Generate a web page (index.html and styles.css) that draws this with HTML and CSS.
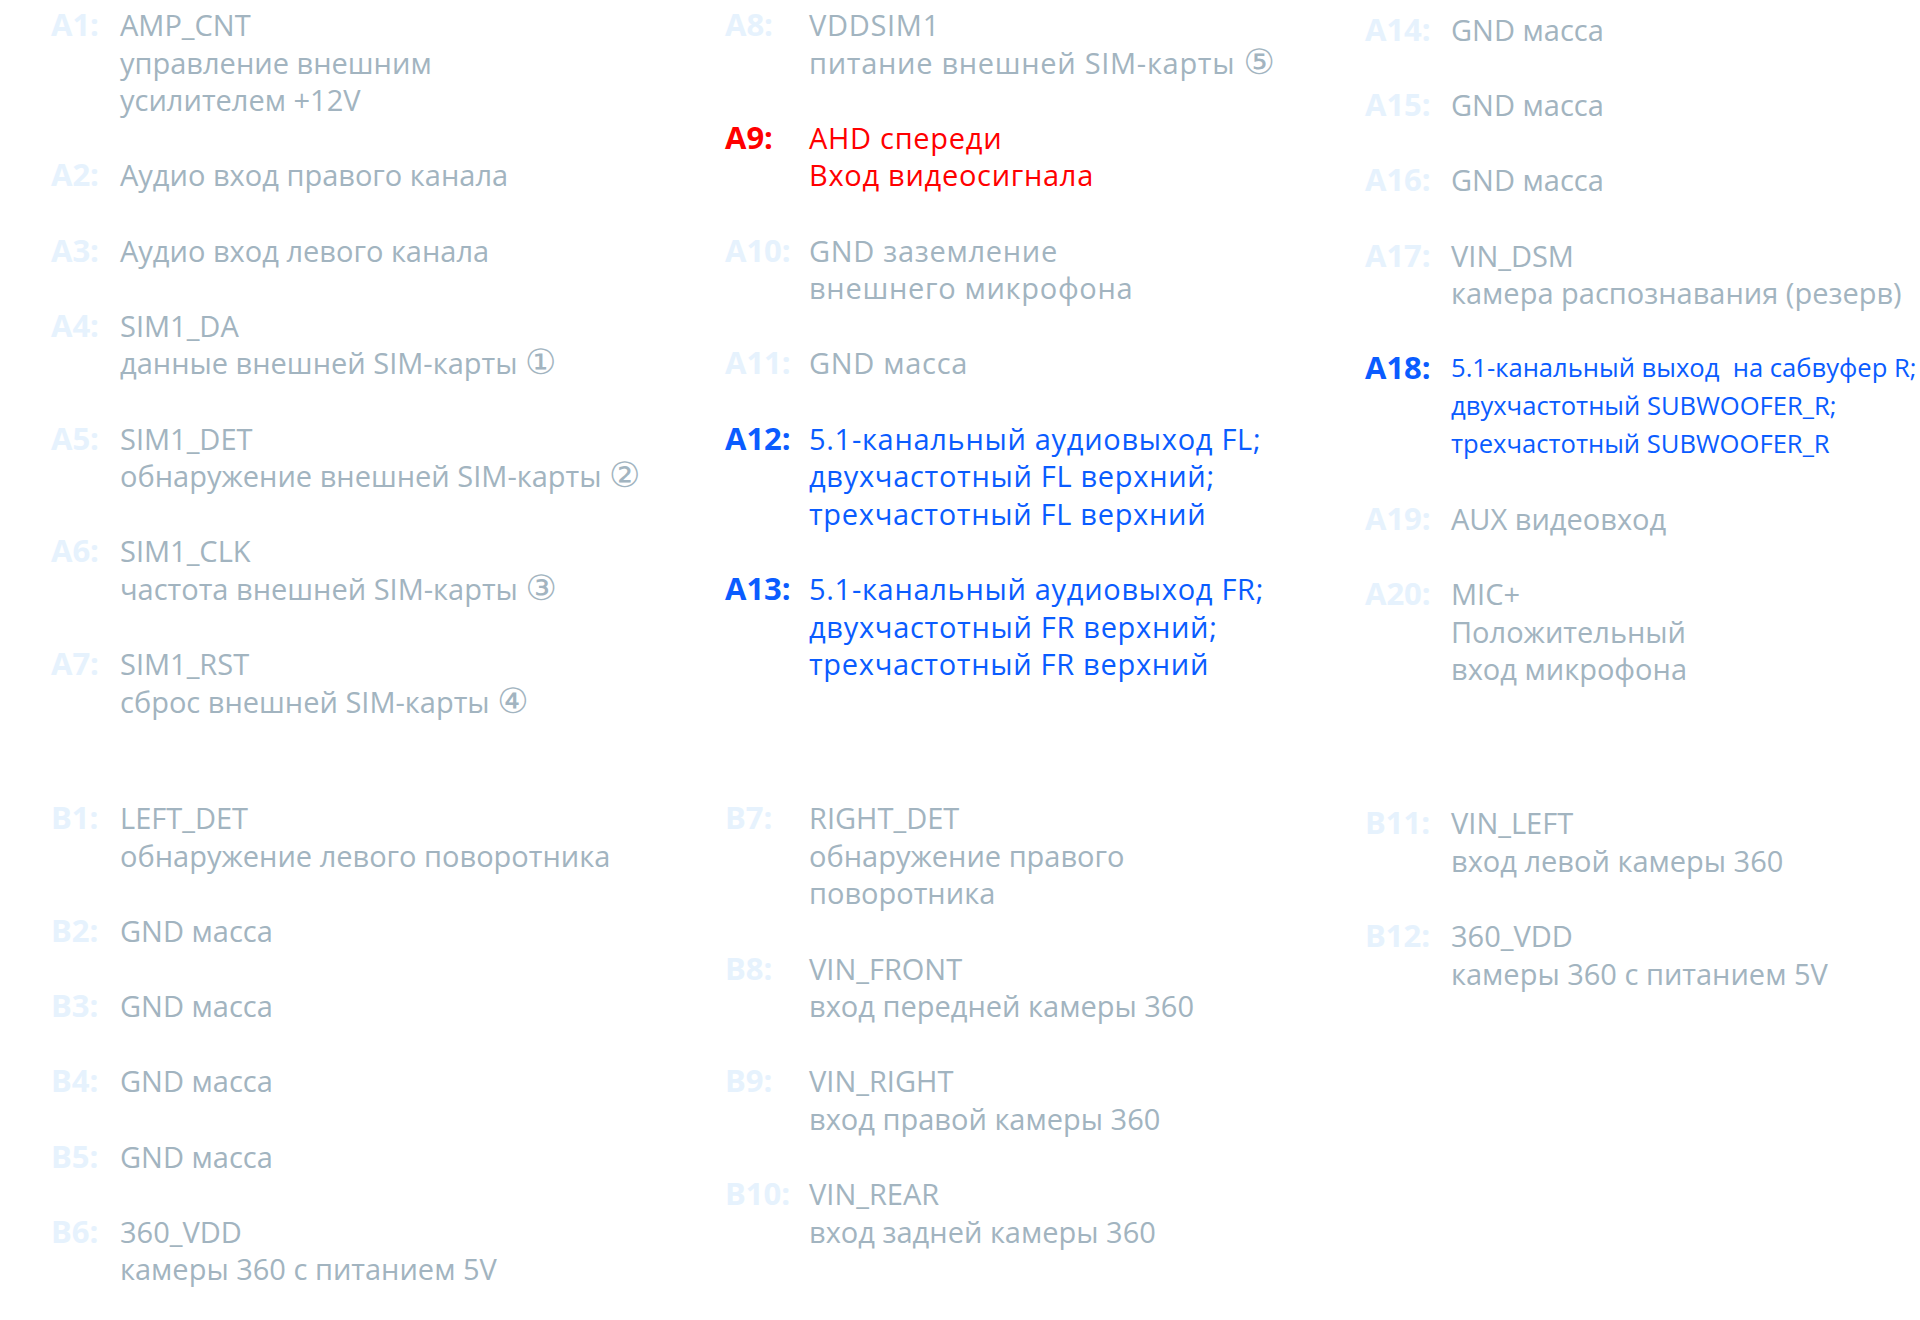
FILE: index.html
```html
<!DOCTYPE html>
<html lang="ru">
<head>
<meta charset="utf-8">
<title>Распиновка разъёма</title>
<link rel="stylesheet" href="styles.css">
</head>
<body>
<main class="page">
  <section class="row row-a">
    <div class="col col-1">
      <div class="entry"><span class="label">A1:</span><div class="text">AMP_CNT<br>управление внешним<br>усилителем +12V</div></div>
      <div class="entry"><span class="label">A2:</span><div class="text">Аудио вход правого канала</div></div>
      <div class="entry"><span class="label">A3:</span><div class="text">Аудио вход левого канала</div></div>
      <div class="entry"><span class="label">A4:</span><div class="text">SIM1_DA<br>данные внешней SIM-карты <span class="circ">①</span></div></div>
      <div class="entry"><span class="label">A5:</span><div class="text">SIM1_DET<br>обнаружение внешней SIM-карты <span class="circ">②</span></div></div>
      <div class="entry"><span class="label">A6:</span><div class="text">SIM1_CLK<br>частота внешней SIM-карты <span class="circ">③</span></div></div>
      <div class="entry"><span class="label">A7:</span><div class="text">SIM1_RST<br>сброс внешней SIM-карты <span class="circ">④</span></div></div>
    </div>
    <div class="col col-2">
      <div class="entry"><span class="label">A8:</span><div class="text">VDDSIM1<br>питание внешней SIM-карты <span class="circ">⑤</span></div></div>
      <div class="entry red"><span class="label">A9:</span><div class="text">AHD спереди<br>Вход видеосигнала</div></div>
      <div class="entry"><span class="label">A10:</span><div class="text">GND заземление<br>внешнего микрофона</div></div>
      <div class="entry"><span class="label">A11:</span><div class="text">GND масса</div></div>
      <div class="entry blue"><span class="label">A12:</span><div class="text">5.1-канальный аудиовыход FL;<br>двухчастотный FL верхний;<br>трехчастотный FL верхний</div></div>
      <div class="entry blue"><span class="label">A13:</span><div class="text">5.1-канальный аудиовыход FR;<br>двухчастотный FR верхний;<br>трехчастотный FR верхний</div></div>
    </div>
    <div class="col col-3">
      <div class="entry"><span class="label">A14:</span><div class="text">GND масса</div></div>
      <div class="entry"><span class="label">A15:</span><div class="text">GND масса</div></div>
      <div class="entry"><span class="label">A16:</span><div class="text">GND масса</div></div>
      <div class="entry"><span class="label">A17:</span><div class="text">VIN_DSM<br>камера распознавания (резерв)</div></div>
      <div class="entry blue small"><span class="label">A18:</span><div class="text">5.1-канальный выход&nbsp; на сабвуфер R;<br>двухчастотный SUBWOOFER_R;<br>трехчастотный SUBWOOFER_R</div></div>
      <div class="entry"><span class="label">A19:</span><div class="text">AUX видеовход</div></div>
      <div class="entry"><span class="label">A20:</span><div class="text">MIC+<br>Положительный<br>вход микрофона</div></div>
    </div>
  </section>
  <section class="row row-b">
    <div class="col col-1">
      <div class="entry"><span class="label">B1:</span><div class="text">LEFT_DET<br>обнаружение левого поворотника</div></div>
      <div class="entry"><span class="label">B2:</span><div class="text">GND масса</div></div>
      <div class="entry"><span class="label">B3:</span><div class="text">GND масса</div></div>
      <div class="entry"><span class="label">B4:</span><div class="text">GND масса</div></div>
      <div class="entry"><span class="label">B5:</span><div class="text">GND масса</div></div>
      <div class="entry"><span class="label">B6:</span><div class="text">360_VDD<br>камеры 360 с питанием 5V</div></div>
    </div>
    <div class="col col-2">
      <div class="entry"><span class="label">B7:</span><div class="text">RIGHT_DET<br>обнаружение правого<br>поворотника</div></div>
      <div class="entry"><span class="label">B8:</span><div class="text">VIN_FRONT<br>вход передней камеры 360</div></div>
      <div class="entry"><span class="label">B9:</span><div class="text">VIN_RIGHT<br>вход правой камеры 360</div></div>
      <div class="entry"><span class="label">B10:</span><div class="text">VIN_REAR<br>вход задней камеры 360</div></div>
    </div>
    <div class="col col-3">
      <div class="entry"><span class="label">B11:</span><div class="text">VIN_LEFT<br>вход левой камеры 360</div></div>
      <div class="entry"><span class="label">B12:</span><div class="text">360_VDD<br>камеры 360 с питанием 5V</div></div>
    </div>
  </section>
</main>
</body>
</html>
```

FILE: styles.css
```css
html, body {
  margin: 0;
  background: #ffffff;
}

body {
  font-family: "Open Sans", "Noto Sans", "DejaVu Sans", sans-serif;
  font-size: 29px;
  line-height: 37.6px;
  color: #a2b4c0;
}

.page {
  padding: 6px 0 0 51px;
}

.row {
  display: grid;
  grid-template-columns: 674px 640px 1fr;
  align-items: start;
}

.row-b {
  margin-top: 79px;
}

.col {
  display: flex;
  flex-direction: column;
  gap: 37.6px;
}

.col-3 {
  padding-top: 5px;
}

.entry {
  display: flex;
  align-items: flex-start;
}

.label {
  flex: 0 0 auto;
  width: 69px;
  font-size: 31px;
  font-weight: 700;
  color: #e6f2fd;
}

.col-2 .label {
  width: 84px;
}

.col-3 .label {
  width: 86px;
}

.text {
  white-space: nowrap;
}

.row-a .col-2 .text {
  letter-spacing: 0.7px;
}

.circ {
  font-family: "DejaVu Sans", sans-serif;
  font-size: 35px;
  line-height: 0;
  letter-spacing: 0;
}

.red .label,
.red .text {
  color: #ff0000;
}

.blue .label,
.blue .text {
  color: #0a5cff;
}

.small .text {
  font-size: 25.6px;
}
```
